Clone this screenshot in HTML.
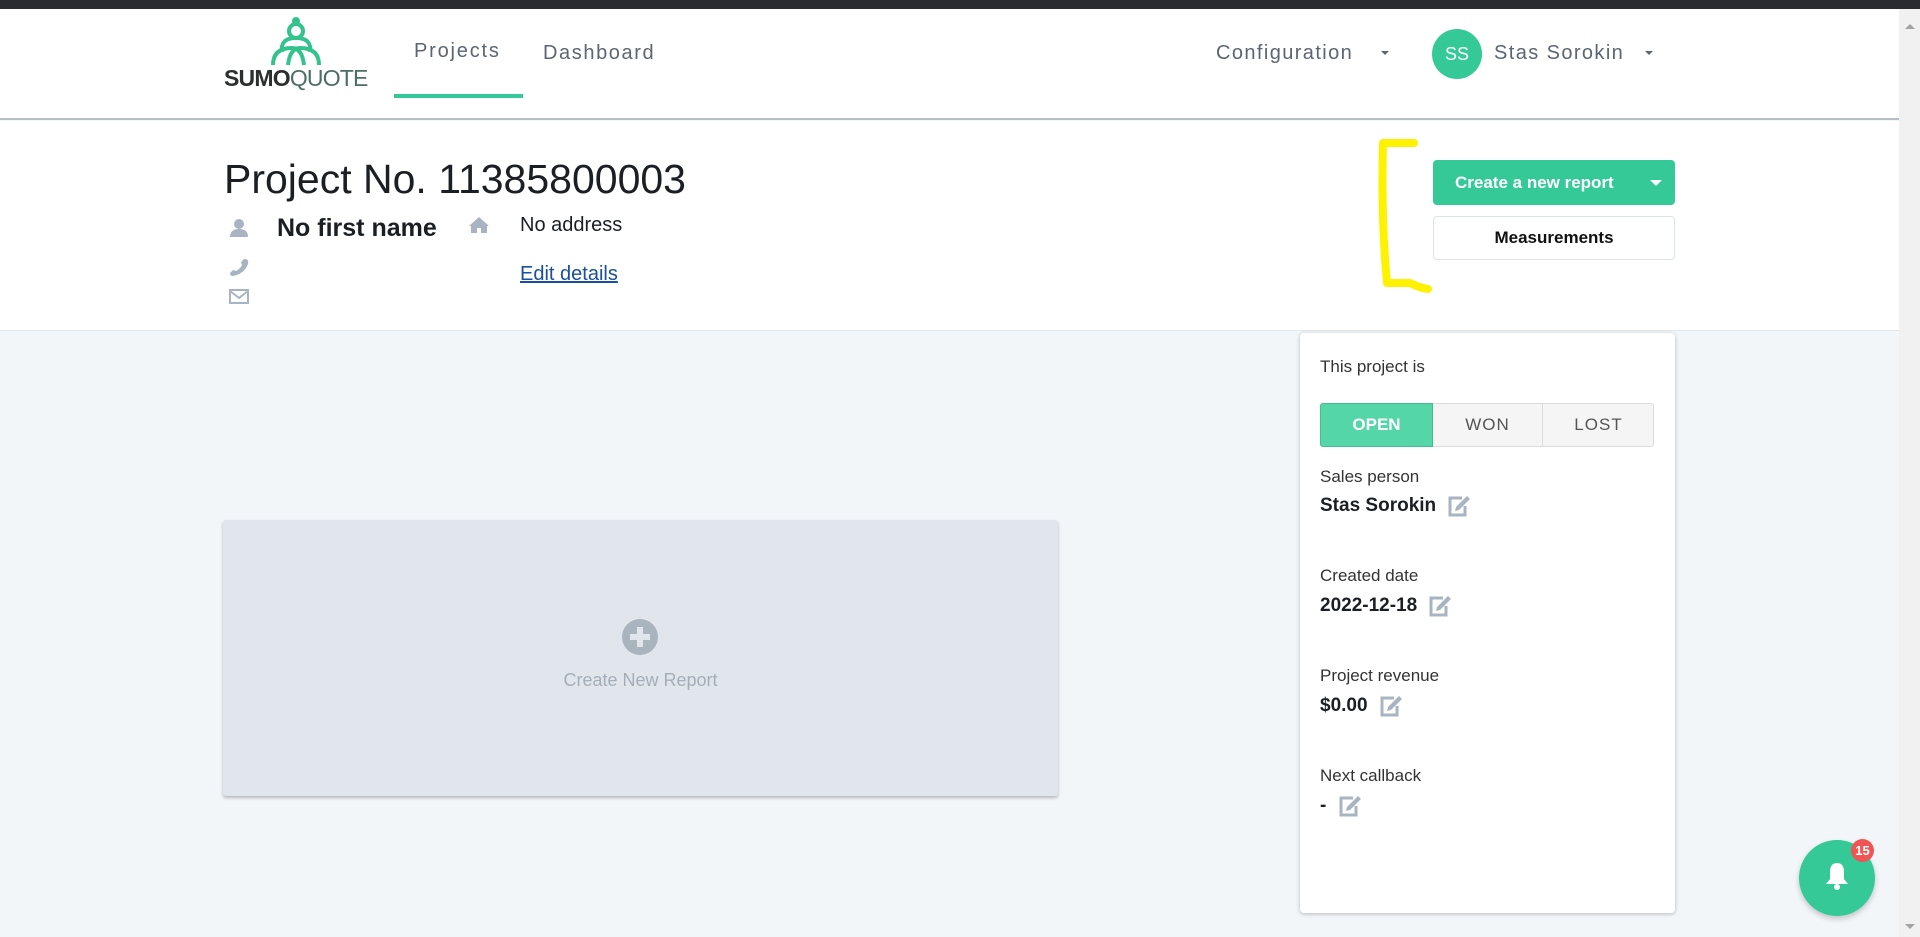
<!DOCTYPE html>
<html><head><meta charset="utf-8"><style>
*{box-sizing:border-box;margin:0;padding:0}
body{width:1920px;height:937px;overflow:hidden;background:#f3f6f9;font-family:"Liberation Sans",sans-serif;position:relative;color:#1b1f24}
.a{position:absolute;white-space:nowrap}
.edit{display:inline-block;vertical-align:middle}
</style></head><body>
<div class="a" style="left:0;top:0;width:1920px;height:9px;background:#2b2c2f"></div>
<div class="a" style="left:0;top:9px;width:1899px;height:111px;background:#fff;border-bottom:2px solid #b9bec4"></div>
<div class="a" style="left:0;top:121px;width:1899px;height:210px;background:#fff;border-bottom:1px solid #e2e7ec"></div>
<div class="a" style="left:1899px;top:9px;width:21px;height:928px;background:#f1f1f1"></div>
<div class="a" style="left:1905px;top:24px;width:0;height:0;border-left:5px solid transparent;border-right:5px solid transparent;border-bottom:5px solid #a3a3a3"></div>
<div class="a" style="left:1905px;top:924px;width:0;height:0;border-left:5px solid transparent;border-right:5px solid transparent;border-top:5px solid #a3a3a3"></div>

<!-- logo -->
<svg class="a" style="left:270px;top:16px" width="52" height="50" viewBox="0 0 52 50">
<g fill="none" stroke="#34c38f" stroke-width="4">
<circle cx="26" cy="15" r="7"/>
<path d="M12 36 Q10 22 26 22 Q42 22 40 36"/>
<path d="M3 49 Q3 32 22 32 Q32 32 34 49"/>
<path d="M18 49 Q20 32 30 32 Q49 32 49 49"/>
</g>
<circle cx="26" cy="5" r="4" fill="#34c38f"/>
</svg>
<div class="a" style="left:224px;top:65px;font-size:23px;font-weight:bold;letter-spacing:-0.8px;color:#2b2f2e">SUMO<span style="font-weight:normal;color:#4d6e66">QUOTE</span></div>

<div class="a" style="left:414px;top:40px;font-size:20px;color:#5b6573;letter-spacing:1.8px">Projects</div>
<div class="a" style="left:394px;top:94px;width:129px;height:4px;background:#34c997"></div>
<div class="a" style="left:543px;top:42px;font-size:20px;color:#5b6573;letter-spacing:1.6px">Dashboard</div>
<div class="a" style="left:1216px;top:42px;font-size:20px;color:#5b6573;letter-spacing:1.4px">Configuration</div>
<div class="a" style="left:1381px;top:51px;border-left:4px solid transparent;border-right:4px solid transparent;border-top:4px solid #5b6573"></div>
<div class="a" style="left:1432px;top:29px;width:50px;height:50px;border-radius:50%;background:#34c997;color:#fff;font-size:18px;text-align:center;line-height:50px">SS</div>
<div class="a" style="left:1494px;top:42px;font-size:20px;color:#5b6573;letter-spacing:1.4px">Stas Sorokin</div>
<div class="a" style="left:1645px;top:51px;border-left:4px solid transparent;border-right:4px solid transparent;border-top:4px solid #5b6573"></div>

<!-- title -->
<div class="a" style="left:224px;top:156px;font-size:41px;color:#1b1f24">Project No. 11385800003</div>
<svg class="a" style="left:229px;top:218px" width="20" height="20" viewBox="0 0 20 20"><circle cx="10" cy="6" r="5" fill="#a9b4c2"/><path d="M1 19 Q1 11 10 11 Q19 11 19 19Z" fill="#a9b4c2"/></svg>
<div class="a" style="left:277px;top:214px;font-size:25px;font-weight:bold">No first name</div>
<svg class="a" style="left:468px;top:216px" width="22" height="18" viewBox="0 0 22 18"><path d="M11 1 L1 10 L3 10 L3 17 L9 17 L9 12 L13 12 L13 17 L19 17 L19 10 L21 10Z" fill="#a9b4c2"/></svg>
<div class="a" style="left:520px;top:214px;font-size:20px;color:#1b1f24">No address</div>
<svg class="a" style="left:229px;top:257px" width="20" height="20" viewBox="0 0 20 20"><path d="M17 2 Q20 3 19 7 Q15 17 4 19 Q1 19 1 16 L4 13 L7 14 Q11 12 13 8 L12 5 L15 2Z" fill="#a9b4c2"/></svg>
<svg class="a" style="left:229px;top:289px" width="20" height="15" viewBox="0 0 20 15"><rect x="1" y="1" width="18" height="13" fill="none" stroke="#a9b4c2" stroke-width="2"/><path d="M1 2 L10 9 L19 2" fill="none" stroke="#a9b4c2" stroke-width="2"/></svg>
<div class="a" style="left:520px;top:263px;font-size:20px;color:#1a4fa0;text-decoration:underline">Edit details</div>

<!-- buttons -->
<div class="a" style="left:1433px;top:160px;width:242px;height:45px;background:#34c997;border-radius:4px;color:#fff;font-size:17px;font-weight:bold;line-height:45px;padding-left:22px">Create a new report</div>
<div class="a" style="left:1650px;top:180px;border-left:6px solid transparent;border-right:6px solid transparent;border-top:6px solid #fff"></div>
<div class="a" style="left:1433px;top:216px;width:242px;height:44px;background:#fff;border:1px solid #dde3ea;border-radius:4px;font-size:17px;font-weight:bold;line-height:42px;text-align:center;color:#111">Measurements</div>
<svg class="a" style="left:0;top:0" width="1920" height="937"><g fill="none" stroke="#fff200" stroke-width="8" stroke-linecap="round" stroke-linejoin="round">
<path d="M1414 143 L1383 143 Q1381 220 1387 283 L1410 283 Q1420 288 1428 289"/>
<path d="M728 570 L774 573 Q768 660 769 740 L708 743"/></g></svg>

<!-- create new report card -->
<div class="a" style="left:223px;top:520px;width:835px;height:276px;background:#e0e6ec;border-radius:3px;box-shadow:0 2px 3px rgba(0,0,0,.25)"></div>
<svg class="a" style="left:622px;top:619px" width="36" height="36" viewBox="0 0 36 36"><circle cx="18" cy="18" r="18" fill="#a9b4bf"/><rect x="8" y="15" width="20" height="6" fill="#e0e6ec"/><rect x="15" y="8" width="6" height="20" fill="#e0e6ec"/></svg>
<div class="a" style="left:223px;top:670px;width:835px;text-align:center;font-size:18px;color:#a5aeb8">Create New Report</div>

<!-- right card -->
<div class="a" style="left:1300px;top:333px;width:375px;height:580px;background:#fff;border-radius:4px;box-shadow:0 1px 4px rgba(0,0,0,.25)"></div>
<div class="a" style="left:1320px;top:357px;font-size:17px;color:#333">This project is</div>
<div class="a" style="left:1320px;top:403px;width:334px;height:44px;background:#f5f5f5;border:1px solid #dcdcdc;border-radius:3px"></div>
<div class="a" style="left:1320px;top:403px;width:113px;height:44px;background:#54d6a8;border:1px solid #3fbf8f;border-radius:3px 0 0 3px;color:#fff;font-weight:bold;font-size:17px;text-align:center;line-height:42px">OPEN</div>
<div class="a" style="left:1433px;top:403px;width:110px;height:44px;border-right:1px solid #dcdcdc;color:#555;font-size:17px;text-align:center;line-height:44px;letter-spacing:1px">WON</div>
<div class="a" style="left:1543px;top:403px;width:111px;height:44px;color:#555;font-size:17px;text-align:center;line-height:44px;letter-spacing:1px">LOST</div>

<div class="a" style="left:1320px;top:467px;font-size:17px;color:#333">Sales person</div>
<div class="a" style="left:1320px;top:495px;font-size:19px;font-weight:bold">Stas Sorokin <svg class="edit" style="margin-left:6px" width="24" height="22" viewBox="0 0 24 22"><path d="M15 3 H3 V20 H18 V11" fill="none" stroke="#a9b4c2" stroke-width="3"/><path d="M20 1 L23 4 L12 15 L8 16 L9 12Z" fill="#a9b4c2"/></svg></div>
<div class="a" style="left:1320px;top:566px;font-size:17px;color:#333">Created date</div>
<div class="a" style="left:1320px;top:595px;font-size:19px;font-weight:bold">2022-12-18 <svg class="edit" style="margin-left:6px" width="24" height="22" viewBox="0 0 24 22"><path d="M15 3 H3 V20 H18 V11" fill="none" stroke="#a9b4c2" stroke-width="3"/><path d="M20 1 L23 4 L12 15 L8 16 L9 12Z" fill="#a9b4c2"/></svg></div>
<div class="a" style="left:1320px;top:666px;font-size:17px;color:#333">Project revenue</div>
<div class="a" style="left:1320px;top:695px;font-size:19px;font-weight:bold">$0.00 <svg class="edit" style="margin-left:6px" width="24" height="22" viewBox="0 0 24 22"><path d="M15 3 H3 V20 H18 V11" fill="none" stroke="#a9b4c2" stroke-width="3"/><path d="M20 1 L23 4 L12 15 L8 16 L9 12Z" fill="#a9b4c2"/></svg></div>
<div class="a" style="left:1320px;top:766px;font-size:17px;color:#333">Next callback</div>
<div class="a" style="left:1320px;top:795px;font-size:19px;font-weight:bold">- <svg class="edit" style="margin-left:6px" width="24" height="22" viewBox="0 0 24 22"><path d="M15 3 H3 V20 H18 V11" fill="none" stroke="#a9b4c2" stroke-width="3"/><path d="M20 1 L23 4 L12 15 L8 16 L9 12Z" fill="#a9b4c2"/></svg></div>

<!-- bell -->
<div class="a" style="left:1799px;top:840px;width:76px;height:76px;border-radius:50%;background:#34c997;box-shadow:0 3px 6px rgba(0,0,0,.2)"></div>
<svg class="a" style="left:1824px;top:861px" width="26" height="30" viewBox="0 0 26 30"><path d="M13 2 Q6 2 6 11 L6 18 L2 23 L24 23 L20 18 L20 11 Q20 2 13 2Z" fill="#fff"/><circle cx="13" cy="26" r="3" fill="#fff"/></svg>
<div class="a" style="left:1851px;top:839px;width:23px;height:23px;border-radius:50%;background:#f05555;color:#fff;font-size:13px;font-weight:bold;text-align:center;line-height:23px">15</div>
</body></html>
